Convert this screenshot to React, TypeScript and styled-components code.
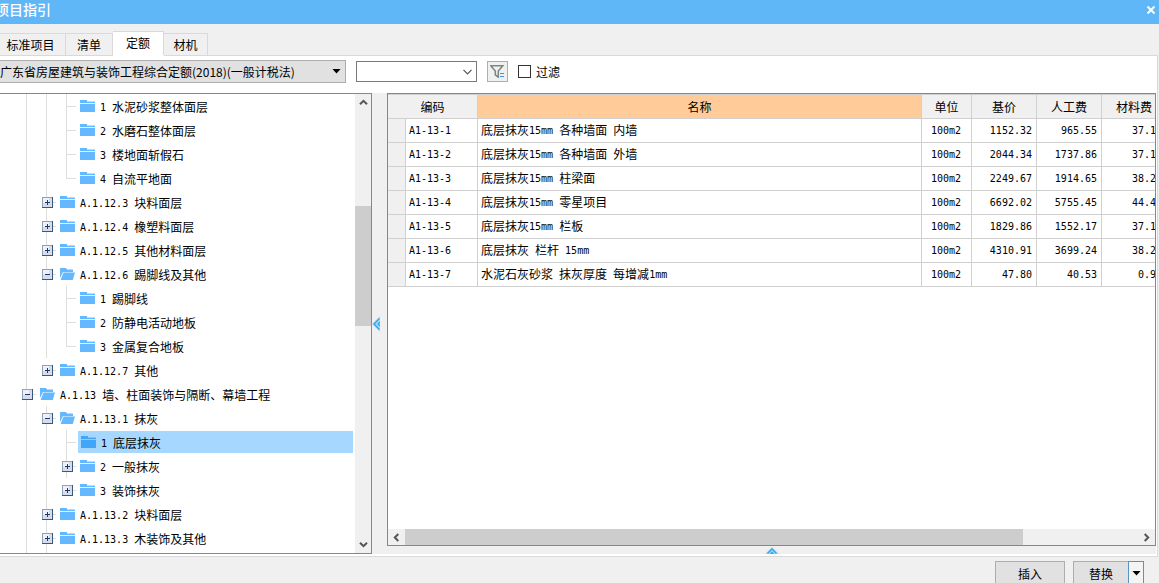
import React from 'react';
import styled, { createGlobalStyle, css } from 'styled-components';

const UI_FONT = '"Noto Sans CJK SC", sans-serif';
const MONO_FONT = '"DejaVu Sans Mono", "Noto Sans CJK SC", monospace';
const GREY = '#f0f0f0';
const FRAME = '#828790';
const LINE = '#d9d9d9';

const GlobalStyle = createGlobalStyle`
  * { box-sizing: border-box; }
  body { margin: 0; overflow: hidden; background: ${GREY}; font: 12px/16px ${UI_FONT}; color: #000; }
  button, input, select { font: inherit; color: inherit; margin: 0; padding: 0; }
  svg { display: block; flex: none; }
  ul { list-style: none; margin: 0; padding: 0; }
`;

const Window = styled.div`
  display: flex;
  flex-direction: column;
  height: 100vh;
  overflow: hidden;
`;

const TitleBar = styled.header`
  display: flex;
  justify-content: space-between;
  flex: none;
  height: 24px;
  padding: 0 2px 0 0;
  background: #60b7f8;
  color: #fff;
`;

const Title = styled.h1`
  margin: 0 0 0 -5px;
  font-size: 14px;
  line-height: 18px;
  font-weight: 500;
`;

const CloseButton = styled.button`
  display: flex;
  align-items: center;
  justify-content: center;
  width: 12px;
  height: 20px;
  border: 0;
  background: none;
`;

const TabBar = styled.div`
  display: flex;
  align-items: flex-end;
  flex: none;
  height: 31px;
  margin-left: -4px;
`;

const Tab = styled.button<{ $active?: boolean; $width: number }>`
  width: ${(p) => p.$width}px;
  height: 22px;
  border: 1px solid ${LINE};
  border-width: 1px 1px 0 0;
  background: ${GREY};
  ${(p) =>
    p.$active &&
    css`
      height: 24px;
      padding-bottom: 2px;
      background: #fff;
      box-shadow: 0 1px 0 #fff;
      z-index: 1;
    `}
`;

const Pane = styled.main`
  display: flex;
  flex-direction: column;
  flex: 1;
  min-height: 0;
  margin-right: 1px;
  padding-bottom: 2px;
  border: 1px solid ${LINE};
  border-left: 0;
  background: #fff;
`;

const Toolbar = styled.div`
  display: flex;
  align-items: center;
  flex: none;
  height: 37px;
  padding: 4px 0 10px;
`;

const Combo = styled.div<{ $width: number; $filled?: boolean }>`
  display: grid;
  align-items: center;
  width: ${(p) => p.$width}px;
  height: ${(p) => (p.$filled ? 23 : 21)}px;
  margin-right: 10px;
  border: 1px solid ${(p) => (p.$filled ? '#adadad' : '#7a7a7a')};
  border-left-width: ${(p) => (p.$filled ? 0 : 1)}px;
  background: ${(p) => (p.$filled ? '#e1e1e1' : '#fff')};
  > * { grid-area: 1 / 1; }
  svg { justify-self: end; margin-right: 4px; pointer-events: none; }
`;

const Select = styled.select`
  appearance: none;
  width: 100%;
  border: 0;
  outline: 0;
  background: transparent;
`;

const FilterButton = styled.button`
  display: flex;
  align-items: center;
  justify-content: center;
  width: 21px;
  height: 21px;
  margin-right: 10px;
  border: 1px solid #adadad;
  background: ${GREY};
`;

const CheckLabel = styled.label`
  display: flex;
  align-items: center;
  gap: 5px;
`;

const CheckBox = styled.input`
  appearance: none;
  width: 13px;
  height: 13px;
  border: 1px solid #333;
  background: #fff;
`;

const Body = styled.div`
  display: flex;
  flex: 1;
  min-height: 0;
`;

const TreePanel = styled.section`
  display: flex;
  flex: none;
  width: 372px;
  border: 1px solid ${FRAME};
  border-left: 0;
`;

const TreeList = styled.ul`
  flex: 1;
  min-width: 0;
  overflow: hidden;
`;

const TreeRow = styled.li`
  display: flex;
  align-items: center;
  height: 24px;
  padding: 0 2px 0 17px;
`;

const Node = styled.div<{ $selected?: boolean }>`
  display: flex;
  align-items: center;
  flex: 1;
  gap: 5px;
  height: 22px;
  margin-left: ${(p) => (p.$selected ? 1 : 0)}px;
  padding-left: 3px;
  background: ${(p) => (p.$selected ? '#a5d7ff' : 'transparent')};
  white-space: pre;
  > span { padding-top: 2px; }
`;

const Mono = styled.span`
  font-family: ${MONO_FONT};
  font-size: 10px;
  vertical-align: 1px;
  white-space: pre;
`;

const ScrollBar = styled.div<{ $horizontal?: boolean }>`
  display: flex;
  flex: none;
  flex-direction: ${(p) => (p.$horizontal ? 'row' : 'column')};
  ${(p) => (p.$horizontal ? 'height: 16px;' : 'width: 16px;')}
  background: ${GREY};
`;

const ScrollButton = styled.button`
  display: flex;
  align-items: center;
  justify-content: center;
  flex: none;
  width: 17px;
  height: 17px;
  border: 0;
  background: none;
  ${ScrollBar} > & { max-width: 100%; max-height: 100%; }
`;

const Thumb = styled.div<{ $share: number }>`
  flex: ${(p) => p.$share} 0 0;
  background: #cdcdcd;
`;

const Track = styled.div<{ $share: number }>`
  flex: ${(p) => p.$share} 0 0;
`;

const Splitter = styled.div<{ $horizontal?: boolean }>`
  display: flex;
  flex: none;
  align-items: center;
  justify-content: ${(p) => (p.$horizontal ? 'center' : 'flex-start')};
  ${(p) => (p.$horizontal ? 'height: 8px;' : 'width: 15px;')}
  background: ${GREY};
`;

const GridColumn = styled.section`
  display: flex;
  flex-direction: column;
  flex: 1;
  min-width: 0;
  padding-right: 1px;
`;

const GridPanel = styled.div`
  display: flex;
  flex-direction: column;
  flex: 1;
  min-height: 0;
  border: 1px solid ${FRAME};
`;

const GridView = styled.div`
  flex: 1;
  min-height: 0;
  overflow: hidden;
`;

const Table = styled.table`
  width: calc(100% + 12px);
  table-layout: fixed;
  border-collapse: separate;
  border-spacing: 0;
`;

const HeadCell = styled.th<{ $current?: boolean }>`
  height: 25px;
  padding: 0;
  border: 1px solid #d0d0d0;
  border-left: 0;
  background: ${(p) => (p.$current ? '#ffcc99' : GREY)};
  font-weight: 400;
  text-align: center;
`;

const Cell = styled.td<{ $align?: 'left' | 'center' | 'right'; $head?: boolean; $clipped?: boolean }>`
  height: 24px;
  padding: 0 ${(p) => (p.$clipped ? 10 : 4)}px 0 3px;
  border: 1px solid #d0d0d0;
  border-width: 0 1px 1px 0;
  background: ${(p) => (p.$head ? GREY : '#fff')};
  text-align: ${(p) => p.$align ?? 'left'};
  white-space: pre;
`;

const Footer = styled.footer`
  display: flex;
  flex: none;
  justify-content: flex-end;
  height: 26px;
  padding: 4px 15px 0 0;
`;

const PushButton = styled.button<{ $width: number }>`
  width: ${(p) => p.$width}px;
  height: 25px;
  border: 1px solid #adadad;
  background: #e1e1e1;
`;

const SplitButton = styled.div`
  display: flex;
  margin-left: 8px;
  ${PushButton} { border-right: 0; }
`;

const DropButton = styled.button`
  display: flex;
  align-items: center;
  justify-content: center;
  width: 16px;
  height: 25px;
  border: 1px solid #5a93bd;
  background: #f4f4f4;
`;

/* Half-width runs are set in the monospaced face, ideographs in the UI face. */
const MixedText = ({ text }: { text: string }) => (
  <span>
    {text.split(/([\x20-\x7e]+)/).map((run, i) => (i % 2 ? <Mono key={i}>{run}</Mono> : run))}
  </span>
);

const Caret = () => (
  <svg width="9" height="5" viewBox="0 0 9 5"><path d="M0.5 0h8L4.5 4.5z" fill="#000" /></svg>
);

const turns = { up: 0, right: 90, down: 180, left: 270 };
const Chevron = ({ to }: { to: keyof typeof turns }) => (
  <svg width="9" height="9" viewBox="0 0 9 9">
    <path d="M1 6.3 4.5 2.8 8 6.3" transform={`rotate(${turns[to]} 4.5 4.5)`} fill="none" stroke="#555" strokeWidth="2" />
  </svg>
);

const Folder = ({ open, selected }: { open?: boolean; selected?: boolean }) => {
  const fill = selected ? '#42a5f5' : '#63b8ff';
  const pale = selected ? '#7cc3fb' : '#b9dffd';
  return open ? (
    <svg width="15" height="12" viewBox="0 0 15 12">
      <path d="M0 0h6l1 1.5h6V4H3L0 10z" fill={fill} />
      <path d="M7 1h6v1H7z" fill={pale} />
      <path d="M3.5 4.5H15l-2.2 7.5H0.6z" fill={fill} />
    </svg>
  ) : (
    <svg width="15" height="12" viewBox="0 0 15 12" shapeRendering="crispEdges">
      <path d="M0 0h7v2H0z" fill={fill} />
      <path d="M7 1h8v1H7z" fill={pale} />
      <path d="M0 2h15v1H0z" fill={fill} />
      <path d="M0 3h15v1H0z" fill={selected ? '#8fcdfd' : '#e6f4ff'} />
      <path d="M0 4h15v8H0z" fill={fill} />
    </svg>
  );
};

type GuideKind = '|' | 'T' | 'L' | '+' | '-' | 'p';

/* '|' through line, 'T' branch, 'L' last branch, '+'/'-' expander, 'p' expander without a line */
const Guide = ({ kind }: { kind: GuideKind }) => {
  const box = kind === '+' || kind === '-' || kind === 'p';
  return (
    <svg width="20" height="24" viewBox="0 0 20 24" shapeRendering="crispEdges">
      {kind !== 'p' && <rect x="9" y="0" width="1" height={kind === 'L' ? 13 : 24} fill="#dedede" />}
      {kind !== '|' && <rect x="10" y="12" width="9" height="1" fill="#dedede" />}
      {box && (
        <g>
          <rect x="5" y="7" width="11" height="11" fill="#3b5878" />
          <rect x="5" y="7" width="10" height="10" fill="#8fa3bd" />
          <rect x="6" y="8" width="9" height="9" fill="#d5dcee" />
          <rect x="6" y="8" width="6" height="5" fill="#eef1f9" />
          <rect x="8" y="12" width="5" height="1" fill="#1f3a66" />
          {kind !== '-' && <rect x="10" y="10" width="1" height="5" fill="#1f3a66" />}
        </g>
      )}
    </svg>
  );
};

type TreeItem = { guides: string; text: string; open?: boolean; selected?: boolean };

const tree: TreeItem[] = [
  { guides: '||T', text: '1 水泥砂浆整体面层' },
  { guides: '||T', text: '2 水磨石整体面层' },
  { guides: '||T', text: '3 楼地面斩假石' },
  { guides: '||L', text: '4 自流平地面' },
  { guides: '|+', text: 'A.1.12.3 块料面层' },
  { guides: '|+', text: 'A.1.12.4 橡塑料面层' },
  { guides: '|+', text: 'A.1.12.5 其他材料面层' },
  { guides: '|-', text: 'A.1.12.6 踢脚线及其他', open: true },
  { guides: '||T', text: '1 踢脚线' },
  { guides: '||T', text: '2 防静电活动地板' },
  { guides: '||L', text: '3 金属复合地板' },
  { guides: '|p', text: 'A.1.12.7 其他' },
  { guides: '-', text: 'A.1.13 墙、柱面装饰与隔断、幕墙工程', open: true },
  { guides: '|-', text: 'A.1.13.1 抹灰', open: true },
  { guides: '||T', text: '1 底层抹灰', selected: true },
  { guides: '||+', text: '2 一般抹灰' },
  { guides: '||p', text: '3 装饰抹灰' },
  { guides: '|+', text: 'A.1.13.2 块料面层' },
  { guides: '|+', text: 'A.1.13.3 木装饰及其他' },
];

const rows = [
  ['A1-13-1', '底层抹灰15mm 各种墙面 内墙', '100m2', '1152.32', '965.55', '37.1'],
  ['A1-13-2', '底层抹灰15mm 各种墙面 外墙', '100m2', '2044.34', '1737.86', '37.1'],
  ['A1-13-3', '底层抹灰15mm 柱梁面', '100m2', '2249.67', '1914.65', '38.2'],
  ['A1-13-4', '底层抹灰15mm 零星项目', '100m2', '6692.02', '5755.45', '44.4'],
  ['A1-13-5', '底层抹灰15mm 栏板', '100m2', '1829.86', '1552.17', '37.1'],
  ['A1-13-6', '底层抹灰 栏杆 15mm', '100m2', '4310.91', '3699.24', '38.2'],
  ['A1-13-7', '水泥石灰砂浆 抹灰厚度 每增减1mm', '100m2', '47.80', '40.53', '0.9'],
];

export default function App() {
  return (
    <Window>
      <GlobalStyle />
      <TitleBar>
        <Title>项目指引</Title>
        <CloseButton aria-label="关闭">
          <svg width="8" height="8" viewBox="0 0 8 8"><path d="M0.5 0.5l7 7M7.5 0.5l-7 7" stroke="#fff" strokeWidth="2" /></svg>
        </CloseButton>
      </TitleBar>
      <TabBar role="tablist">
        <Tab role="tab" $width={70}>标准项目</Tab>
        <Tab role="tab" $width={47}>清单</Tab>
        <Tab role="tab" aria-selected $active $width={51}>定额</Tab>
        <Tab role="tab" $width={44}>材机</Tab>
      </TabBar>
      <Pane>
        <Toolbar>
          <Combo $width={346} $filled>
            <Select aria-label="定额库">
              <option>广东省房屋建筑与装饰工程综合定额(2018)(一般计税法)</option>
            </Select>
            <Caret />
          </Combo>
          <Combo $width={121}>
            <Select aria-label="专业">
              <option></option>
            </Select>
            <svg width="9" height="6" viewBox="0 0 9 6"><path d="M0.5 0.8l4 4 4-4" fill="none" stroke="#555" strokeWidth="1.2" /></svg>
          </Combo>
          <FilterButton aria-label="筛选">
            <svg width="15" height="13" viewBox="0 0 15 13">
              <path d="M0.8 0.8h12L8.3 6v6.2L5.3 9.8V6z" fill="none" stroke="#7d8585" strokeWidth="1.5" />
              <path d="M10 8.5h4M10 11.5h4" stroke="#2f97ee" />
            </svg>
          </FilterButton>
          <CheckLabel><CheckBox type="checkbox" />过滤</CheckLabel>
        </Toolbar>
        <Body>
          <TreePanel>
            <TreeList role="tree">
              {tree.map((item, i) => (
                <TreeRow key={i} role="treeitem" aria-selected={!!item.selected}>
                  {item.guides.split('').map((g, j) => <Guide key={j} kind={g as GuideKind} />)}
                  <Node $selected={item.selected}>
                    <Folder open={item.open} selected={item.selected} />
                    <MixedText text={item.text} />
                  </Node>
                </TreeRow>
              ))}
              <TreeRow role="presentation"><Guide kind="|" /><Guide kind="|" /></TreeRow>
            </TreeList>
            <ScrollBar>
              <ScrollButton aria-label="向上"><Chevron to="up" /></ScrollButton>
              <Track $share={95} />
              <Thumb $share={120} />
              <Track $share={210} />
              <ScrollButton aria-label="向下"><Chevron to="down" /></ScrollButton>
            </ScrollBar>
          </TreePanel>
          <Splitter>
            <svg width="8" height="16" viewBox="0 0 8 16">
              <path d="M8 0v16L0 8z" fill="#a9dcf8" />
              <path d="M7.5 2.5 2 8l5.5 5.5M8 6 6 8l2 2" fill="none" stroke="#2ea3e6" strokeWidth="1.3" />
            </svg>
          </Splitter>
          <GridColumn>
            <GridPanel>
              <GridView>
                <Table>
                  <colgroup>
                    <col style={{ width: 18 }} />
                    <col style={{ width: 72 }} />
                    <col />
                    <col style={{ width: 50 }} />
                    <col style={{ width: 65 }} />
                    <col style={{ width: 65 }} />
                    <col style={{ width: 65 }} />
                  </colgroup>
                  <thead>
                    <tr>
                      <HeadCell colSpan={2}>编码</HeadCell>
                      <HeadCell $current>名称</HeadCell>
                      <HeadCell>单位</HeadCell>
                      <HeadCell>基价</HeadCell>
                      <HeadCell>人工费</HeadCell>
                      <HeadCell>材料费</HeadCell>
                    </tr>
                  </thead>
                  <tbody>
                    {rows.map(([code, name, unit, base, labour, material]) => (
                      <tr key={code}>
                        <Cell $head />
                        <Cell><Mono>{code}</Mono></Cell>
                        <Cell><MixedText text={name} /></Cell>
                        <Cell $align="center"><Mono>{unit}</Mono></Cell>
                        <Cell $align="right"><Mono>{base}</Mono></Cell>
                        <Cell $align="right"><Mono>{labour}</Mono></Cell>
                        <Cell $align="right" $clipped><Mono>{material}</Mono></Cell>
                      </tr>
                    ))}
                  </tbody>
                </Table>
              </GridView>
              <ScrollBar $horizontal>
                <ScrollButton aria-label="向左"><Chevron to="left" /></ScrollButton>
                <Thumb $share={618} />
                <Track $share={115} />
                <ScrollButton aria-label="向右"><Chevron to="right" /></ScrollButton>
              </ScrollBar>
            </GridPanel>
            <Splitter $horizontal>
              <svg width="14" height="7" viewBox="0 0 14 7">
                <path d="M0 7h14L7 0z" fill="#a9dcf8" />
                <path d="M2.5 6.5 7 2l4.5 4.5M5.5 7 7 5.5 8.5 7" fill="none" stroke="#2ea3e6" strokeWidth="1.3" />
              </svg>
            </Splitter>
          </GridColumn>
        </Body>
      </Pane>
      <Footer>
        <PushButton $width={70}>插入</PushButton>
        <SplitButton>
          <PushButton $width={55}>替换</PushButton>
          <DropButton aria-label="更多"><Caret /></DropButton>
        </SplitButton>
      </Footer>
    </Window>
  );
}
